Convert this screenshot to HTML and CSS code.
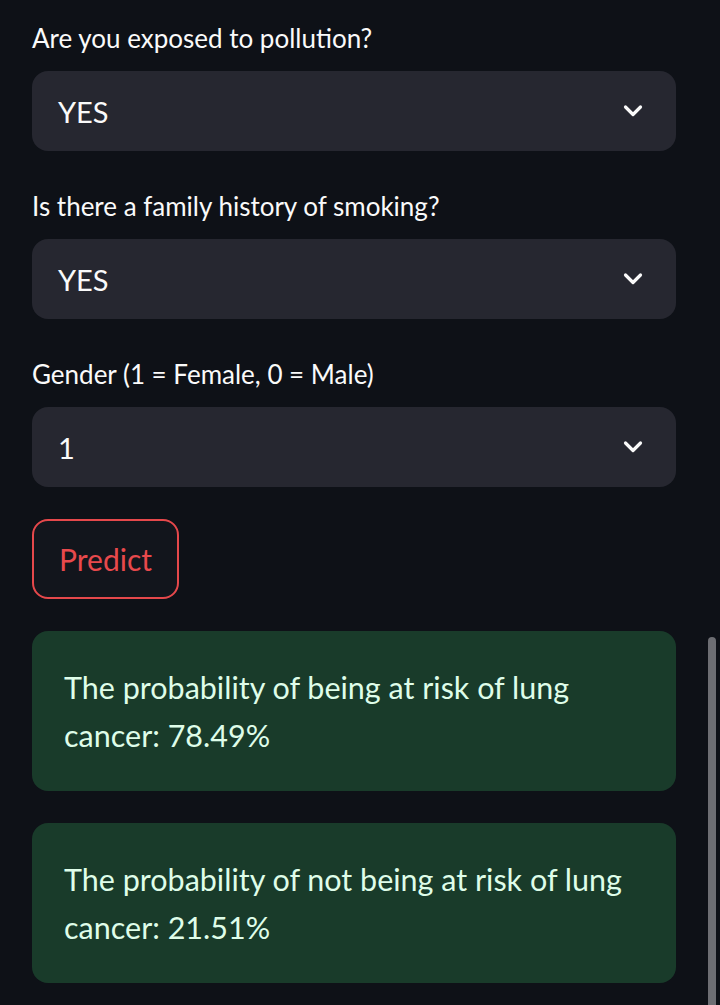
FILE: index.html
```html
<!DOCTYPE html>
<html lang="en">
<head>
<meta charset="utf-8">
<title>Lung cancer risk</title>
<link rel="stylesheet" href="styles.css">
</head>
<body>
<main class="app">
  <div class="fields">
    <div class="field">
      <label class="field-label">Are you exposed to pollution?</label>
      <div class="select">
        <span class="select-value">YES</span>
        <svg class="chevron" width="20" height="14" viewBox="0 0 20 14"><polyline points="2.5,3 10,10.5 17.5,3" fill="none" stroke="#fafafa" stroke-width="3.2" stroke-linecap="round" stroke-linejoin="round"/></svg>
      </div>
    </div>
    <div class="field">
      <label class="field-label">Is there a family history of smoking?</label>
      <div class="select">
        <span class="select-value">YES</span>
        <svg class="chevron" width="20" height="14" viewBox="0 0 20 14"><polyline points="2.5,3 10,10.5 17.5,3" fill="none" stroke="#fafafa" stroke-width="3.2" stroke-linecap="round" stroke-linejoin="round"/></svg>
      </div>
    </div>
    <div class="field">
      <label class="field-label">Gender (1 = Female, 0 = Male)</label>
      <div class="select">
        <span class="select-value">1</span>
        <svg class="chevron" width="20" height="14" viewBox="0 0 20 14"><polyline points="2.5,3 10,10.5 17.5,3" fill="none" stroke="#fafafa" stroke-width="3.2" stroke-linecap="round" stroke-linejoin="round"/></svg>
      </div>
    </div>
  </div>
  <button class="btn">Predict</button>
  <div class="alert">The probability of being at risk of lung cancer: 78.49%</div>
  <div class="alert">The probability of not being at risk of lung cancer: 21.51%</div>
</main>
<div class="scrollbar"></div>
</body>
</html>
```
FILE: styles.css
```css
html, body {
  margin: 0;
  padding: 0;
  background: #0e1117;
  height: 100%;
  overflow: hidden;
}
body {
  font-family: "Source Sans Pro", Lato, "Liberation Sans", sans-serif;
  color: #fafafa;
}
.app {
  display: flex;
  flex-direction: column;
  gap: 32px;
  padding: 22px 44px 0 32px;
}
.fields {
  display: flex;
  flex-direction: column;
  gap: 39px;
}
.field {
  display: flex;
  flex-direction: column;
  gap: 17px;
}
.field-label {
  font-size: 26px;
  line-height: 32px;
  color: #fafafa;
}
.select {
  height: 80px;
  background: #262730;
  border-radius: 16px;
  display: flex;
  align-items: center;
  justify-content: space-between;
  padding: 0 33px 0 26px;
}
.select-value {
  font-size: 29px;
  color: #fafafa;
}
.chevron {
  display: block;
}
.btn {
  align-self: flex-start;
  height: 80px;
  padding: 0 25px;
  background: #12151c;
  border: 2px solid #e5484b;
  border-radius: 16px;
  color: #e8494c;
  font-family: inherit;
  font-size: 30px;
}
.alert {
  background: #193b2a;
  color: #dffde9;
  border-radius: 16px;
  padding: 32px;
  font-size: 30.5px;
  line-height: 48px;
}
.scrollbar {
  position: fixed;
  left: 708px;
  top: 637px;
  width: 8px;
  bottom: 0;
  background: #6d6e73;
  border-radius: 4px 4px 0 0;
}
```
